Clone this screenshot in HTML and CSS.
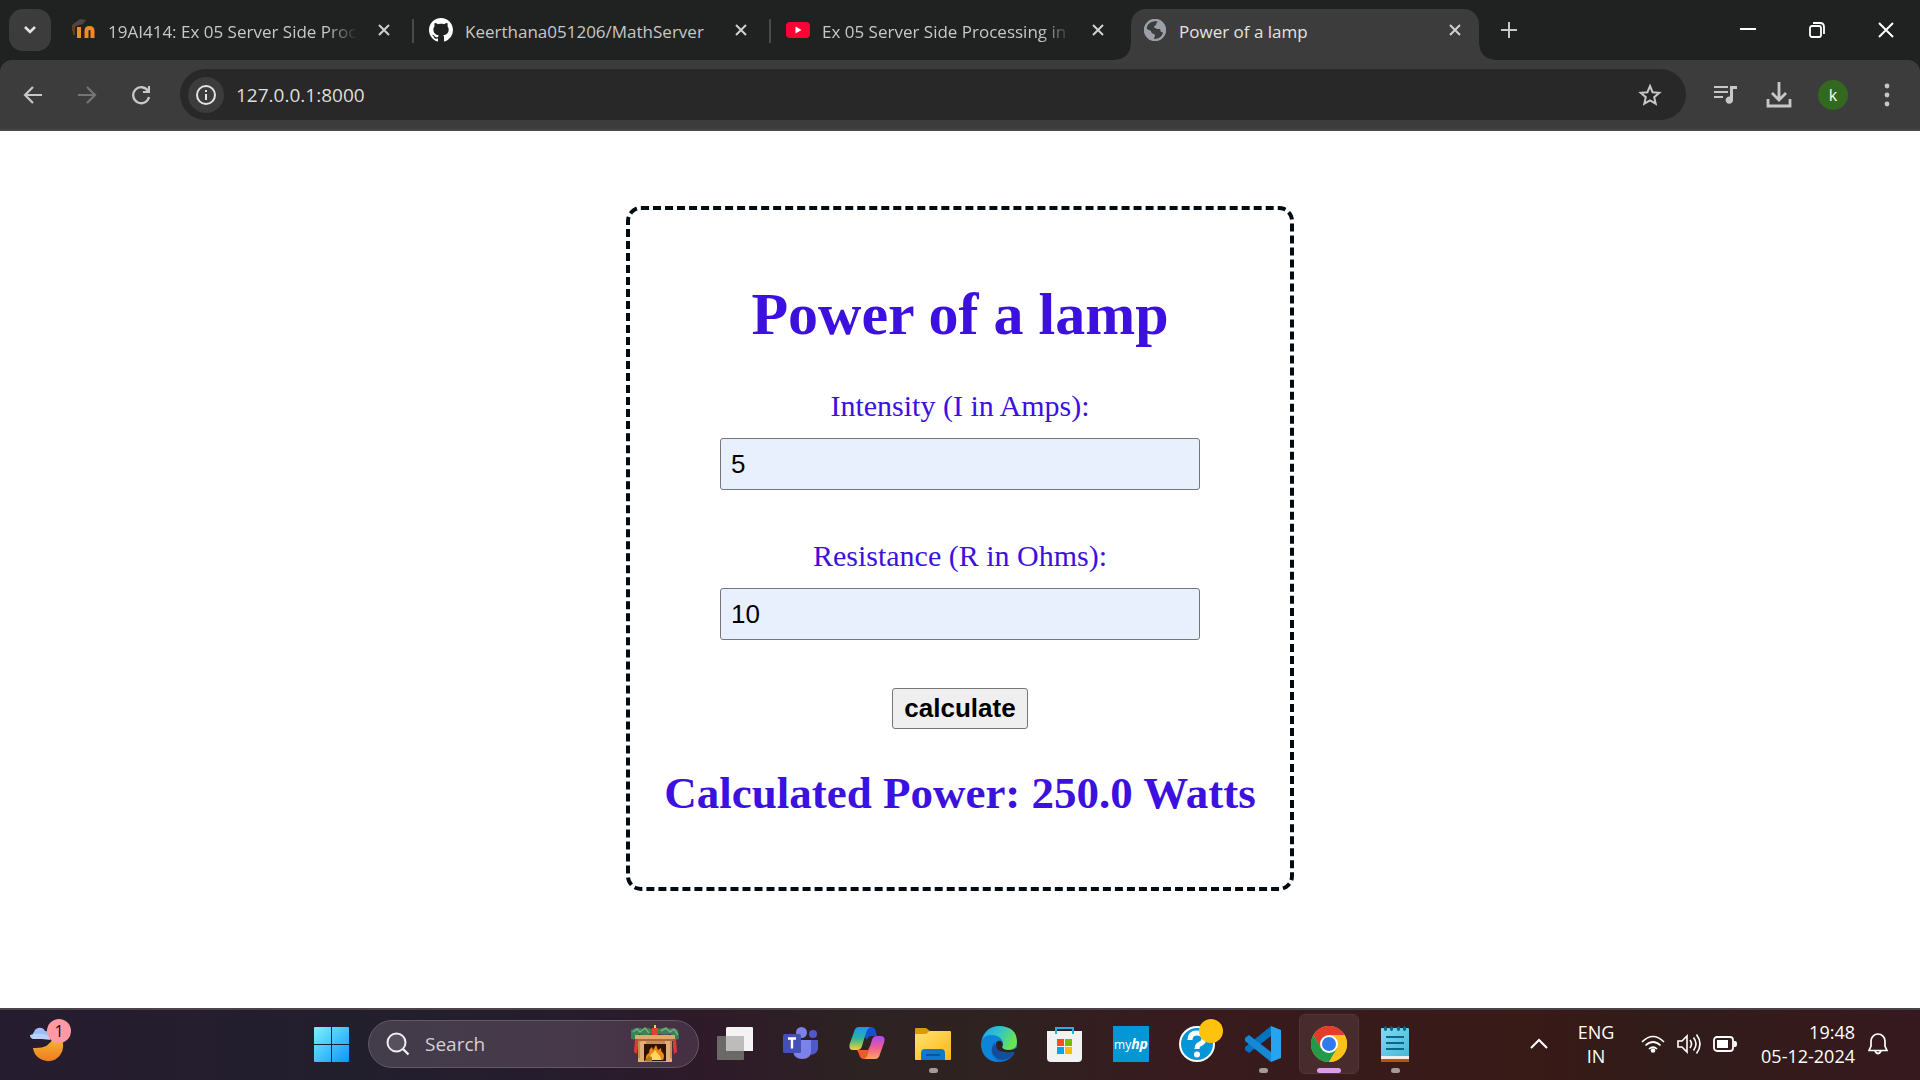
FILE: index.html
```html
<!DOCTYPE html>
<html lang="en">
<head>
<meta charset="utf-8">
<meta name="viewport" content="width=device-width, initial-scale=1">
<title>Power of a lamp</title>
<link rel="stylesheet" href="styles.css">
</head>
<body>
<header class="browser">
  <div class="tabstrip">
    <button class="tab-search" aria-label="Search tabs"><svg width="14" height="10" viewBox="0 0 14 10"><path d="M2 2l5 5 5-5" fill="none" stroke="#e3e3e3" stroke-width="2.6"/></svg></button>
    <div class="tab">
      <svg class="favicon" viewBox="0 0 24 24"><path d="M0 7L8 1l6 1-3 4-7 2-2 5H0z" fill="#50463f"/><path d="M0 9h3v8H1z" fill="#6b3a1d"/><path d="M7 20V9M14.500 20v-7q0-3 3-3t3 3v7" fill="none" stroke="#f08a24" stroke-width="4"/></svg>
      <a class="tab-title fade" href="#">19AI414: Ex 05 Server Side Processing</a>
      <button class="tab-close" aria-label="Close tab"><svg width="14" height="14" viewBox="0 0 14 14"><path d="M2 2l10 10M12 2L2 12"/></svg></button>
    </div>
    <div class="tab divided">
      <svg class="favicon" viewBox="0 0 16 16"><path fill="#fff" d="M8 0C3.58 0 0 3.58 0 8c0 3.54 2.29 6.53 5.47 7.59.4.07.55-.17.55-.38 0-.19-.01-.82-.01-1.49-2.01.37-2.53-.49-2.69-.94-.09-.23-.48-.94-.82-1.13-.28-.15-.68-.52-.01-.53.63-.01 1.08.58 1.23.82.72 1.21 1.87.87 2.33.66.07-.52.28-.87.51-1.07-1.78-.2-3.64-.89-3.64-3.95 0-.87.31-1.59.82-2.15-.08-.2-.36-1.02.08-2.12 0 0 .67-.21 2.2.82.64-.18 1.32-.27 2-.27s1.36.09 2 .27c1.53-1.04 2.2-.82 2.2-.82.44 1.1.16 1.92.08 2.12.51.56.82 1.27.82 2.15 0 3.07-1.87 3.75-3.65 3.95.29.25.54.73.54 1.48 0 1.07-.01 1.93-.01 2.2 0 .21.15.46.55.38A8.01 8.01 0 0016 8c0-4.42-3.58-8-8-8z"/></svg>
      <a class="tab-title" href="#">Keerthana051206/MathServer</a>
      <button class="tab-close" aria-label="Close tab"><svg width="14" height="14" viewBox="0 0 14 14"><path d="M2 2l10 10M12 2L2 12"/></svg></button>
    </div>
    <div class="tab divided">
      <svg class="favicon" viewBox="0 0 24 24"><rect y="4" width="24" height="16" rx="4" fill="#ff0033"/><path d="M9.500 8.500v7l6-3.500z" fill="#fff"/></svg>
      <a class="tab-title fade" href="#">Ex 05 Server Side Processing in Django</a>
      <button class="tab-close" aria-label="Close tab"><svg width="14" height="14" viewBox="0 0 14 14"><path d="M2 2l10 10M12 2L2 12"/></svg></button>
    </div>
    <div class="tab active">
      <svg class="favicon" viewBox="0 0 24 24"><circle cx="12" cy="12" r="11" fill="#9aa0a6"/><path d="M13 3c3 0 1 2 0 3 1 2-2 1-2 3 0 1 2 1 3 2h3c1 2 0 3 2 3l1 1c-1 4-4 6-7 7l-2-1c0-2 1-2 1-4-1-2-4-1-4-4l-4-2c-1-5 4-8 9-8z" fill="#3c3c3c"/><circle cx="12" cy="12" r="10" fill="none" stroke="#9aa0a6" stroke-width="2"/></svg>
      <a class="tab-title" href="#">Power of a lamp</a>
      <button class="tab-close" aria-label="Close tab"><svg width="14" height="14" viewBox="0 0 14 14"><path d="M2 2l10 10M12 2L2 12"/></svg></button>
    </div>
    <button class="new-tab" aria-label="New tab"><svg width="18" height="18" viewBox="0 0 18 18"><path d="M9 1v16M1 9h16" stroke="#c7c7c7" stroke-width="2"/></svg></button>
    <div class="window-controls">
      <button aria-label="Minimize"><svg width="16" height="16" viewBox="0 0 16 16"><path d="M0 7h16" stroke="#fff" stroke-width="2"/></svg></button>
      <button aria-label="Restore"><svg width="16" height="16" viewBox="0 0 16 16"><g fill="none" stroke="#fff" stroke-width="1.800"><rect x="1" y="4" width="11" height="11" rx="2"/><path d="M4 1h7q4 0 4 4v7"/></g></svg></button>
      <button aria-label="Close"><svg width="16" height="16" viewBox="0 0 16 16"><path d="M1 1l14 14M15 1L1 15" stroke="#fff" stroke-width="2"/></svg></button>
    </div>
  </div>
  <div class="toolbar">
    <nav class="nav">
      <button aria-label="Back"><svg width="20" height="20" viewBox="0 0 20 20"><path d="M19 10H2M10 2l-8 8 8 8" fill="none" stroke="#c7c7c7" stroke-width="2.200"/></svg></button>
      <button aria-label="Forward"><svg width="20" height="20" viewBox="0 0 20 20"><path d="M1 10h17M10 2l8 8-8 8" fill="none" stroke="#757575" stroke-width="2.200"/></svg></button>
      <button aria-label="Reload"><svg width="20" height="20" viewBox="0 0 20 20"><path d="M17 6a8 8 0 1 0 1 6" fill="none" stroke="#c7c7c7" stroke-width="2.300"/><path d="M19 1v7h-7V6h5V1z" fill="#c7c7c7"/></svg></button>
    </nav>
    <div class="omnibox">
      <button class="site-info" aria-label="View site information"><svg width="20" height="20" viewBox="0 0 20 20"><circle cx="10" cy="10" r="9" fill="none" stroke="#e3e3e3" stroke-width="2"/><path d="M10 9v6M10 5v2" stroke="#e3e3e3" stroke-width="2"/></svg></button>
      <input class="address" type="text" value="127.0.0.1:8000" aria-label="Address">
      <button class="bookmark" aria-label="Bookmark this tab"><svg width="24" height="24" viewBox="0 0 24 24"><path d="M12 3l2.600 6.200 6.700.6-5.100 4.400 1.500 6.500L12 17.300l-5.700 3.400 1.500-6.500-5.100-4.400 6.700-.6z" fill="none" stroke="#c7c7c7" stroke-width="2"/></svg></button>
    </div>
    <div class="actions">
      <button aria-label="Media controls"><svg width="24" height="24" viewBox="0 0 24 24"><path d="M1 4h14M1 9h14M1 14h9" stroke="#c7c7c7" stroke-width="2.200"/><path d="M17 16V3h7v3h-4v11a3.700 3.700 0 1 1-3-3.500z" fill="#c7c7c7"/></svg></button>
      <button aria-label="Downloads"><svg width="26" height="26" viewBox="0 0 26 26"><path d="M13 0v17M6 11l7 7 7-7M2 17v7h22v-7" fill="none" stroke="#c7c7c7" stroke-width="2.800"/></svg></button>
      <button aria-label="Profile"><span class="avatar">k</span></button>
      <button aria-label="Menu"><svg width="6" height="24" viewBox="0 0 6 24"><g fill="#c7c7c7"><circle cx="3" cy="3" r="2.400"/><circle cx="3" cy="12" r="2.400"/><circle cx="3" cy="21" r="2.400"/></g></svg></button>
    </div>
  </div>
</header>

<main class="page">
  <form class="card">
    <h1 class="heading">Power of a lamp</h1>
    <div class="field">
      <label for="intensity">Intensity (I in Amps):</label>
      <input id="intensity" type="text" value="5">
    </div>
    <div class="field">
      <label for="resistance">Resistance (R in Ohms):</label>
      <input id="resistance" type="text" value="10">
    </div>
    <button class="calculate" type="button">calculate</button>
    <h2 class="result">Calculated Power: 250.0 Watts</h2>
  </form>
</main>

<footer class="taskbar">
  <div class="widgets">
    <button class="weather" aria-label="Weather">
      <svg width="36" height="36" viewBox="0 0 36 36"><defs><linearGradient id="moon" x1="0" y1="0" x2="0" y2="1"><stop offset="0" stop-color="#f7b73a"/><stop offset="1" stop-color="#ee7d1f"/></linearGradient></defs><path d="M4 22a15 15 0 0 0 30-4q0-4-2-7l-8 1q-4 11-20 10z" fill="url(#moon)"/><path d="M5 12a4 4 0 0 1 0-6 6 6 0 0 1 11-1q5 0 5 5v4z" fill="#9dbdf5"/><path d="M1 9q10-3 20 1v3H4q-3-1-3-4z" fill="#b9d2fb"/></svg>
      <span class="count">1</span>
    </button>
  </div>
  <nav class="apps">
    <button class="app start" aria-label="Start"><svg width="36" height="36" viewBox="0 0 36 36"><defs><linearGradient id="win" gradientUnits="userSpaceOnUse" x1="0" y1="0" x2="36" y2="36"><stop offset="0" stop-color="#7df3ff"/><stop offset="1" stop-color="#0a94f8"/></linearGradient></defs><path d="M0 2q0-1 1-1h16v17H0zM18 1h16q1 0 1 1v16H18zM0 19h17v17H1q-1 0-1-1zM18 19h17v16q0 1-1 1H18z" fill="url(#win)"/></svg></button>
    <label class="search">
      <svg width="24" height="24" viewBox="0 0 24 24"><circle cx="10.500" cy="10.500" r="9" fill="#57505f" stroke="#eee" stroke-width="2"/><path d="M17 17l5.500 5.500" stroke="#eee" stroke-width="2.400"/></svg>
      <input type="search" placeholder="Search" aria-label="Search">
      <svg class="fireplace" width="50" height="38" viewBox="0 0 50 38"><path d="M8 15h34v22H8z" fill="#c98c54"/><path d="M12 16h4v21H8v-3l2-1V17zM35 16h5v17l2 1v3h-7z" fill="#e3ae75"/><path d="M14 19h22v17H14z" fill="#2d1409"/><path d="M16 35q-1-5 3-7 0-4 3-6l1 3 3-5 2 5 3-2q0 4 2 5 2 3 0 7z" fill="#ef8615"/><path d="M19 35q1-6 4-7l2-3 3 4q3 2 3 6z" fill="#ffd95b"/><path d="M15 35l4-4 3 1v4h-7z" fill="#b37224"/><path d="M1 5q6-4 12-1 7-3 11 2 7-5 12-2 7-2 12 1l1 9q-6 2-8-5-8 2-16-1-9 4-16 1-2 7-8 5z" fill="#3f7d5b"/><path d="M3 7l4-3 3 3 5-4 4 5M31 6l5-3 4 4 4-3 4 6" fill="none" stroke="#77ae79" stroke-width="1.500"/><path d="M5 10h40v4H5z" fill="#e2a86b"/><path d="M7 14h36v2H7z" fill="#a9673c"/><path d="M22 3h6v7h-6z" fill="#e0432f"/><path d="M25 0v3" stroke="#ffc94a" stroke-width="2"/><path d="M5 14h3v7l-1 8-3-2zM43 14h3l1 13-3 2-1-8z" fill="#dc3a35"/></svg>
    </label>
    <button class="app" aria-label="Task view"><svg width="36" height="36" viewBox="0 0 36 36"><path d="M10 1h25q1 0 1 1v23H9V2z" fill="#f3f3f3"/><rect y="10" width="27" height="24" rx="1" fill="#6b6967"/><path d="M9 10h18v15H9z" fill="#bdbcbb"/></svg></button>
    <button class="app" aria-label="Teams"><svg width="36" height="36" viewBox="0 0 36 36"><circle cx="30" cy="8" r="4" fill="#5059c9"/><path d="M25 14h10v9a7 7 0 0 1-10 5z" fill="#5059c9"/><circle cx="18.500" cy="6.500" r="5.500" fill="#7b83eb"/><path d="M11 14h17v11q0 8-9 8-8 0-9-8z" fill="#7b83eb"/><rect y="8" width="18" height="19" rx="1.500" fill="#4350b5"/><path d="M5 12.500h8M9 12.500v10" stroke="#fff" stroke-width="2.400"/></svg></button>
    <button class="app" aria-label="Copilot"><svg width="36" height="36" viewBox="0 0 36 36"><defs><linearGradient id="cpa" x1="0" y1="0" x2="0" y2="1"><stop offset="0" stop-color="#1c94f5"/><stop offset=".5" stop-color="#2fb59d"/><stop offset="1" stop-color="#f4d22c"/></linearGradient><linearGradient id="cpb" x1="0" y1="0" x2="0" y2="1"><stop offset="0" stop-color="#a64cf0"/><stop offset=".5" stop-color="#ef5d95"/><stop offset="1" stop-color="#fda45c"/></linearGradient></defs><path d="M10 1h12q4 0 5 5l1 4h-5q-4 0-5 4l-4-6z" fill="#1450cf"/><path d="M8 24h11l2-4 3 6-4 7h-5q-4 0-5-5z" fill="#ef5a2a"/><path d="M10 1h12q-3 0-5 6l-4 13q-1 4-5 4H4q-5 0-3-7L5 6q1-5 5-5z" fill="url(#cpa)"/><path d="M26 33H14q4 0 5-6l4-13q1-4 5-4h4q5 0 3 7l-4 11q-1 5-5 5z" fill="url(#cpb)"/></svg></button>
    <button class="app running" aria-label="File Explorer"><svg width="36" height="36" viewBox="0 0 36 36"><defs><linearGradient id="fold" x1="0" y1="0" x2="1" y2="1"><stop offset="0" stop-color="#ffe173"/><stop offset="1" stop-color="#fdb813"/></linearGradient></defs><path d="M0 3q0-1 1-1h10l4 3v5H0z" fill="#dc9a0a"/><path d="M0 8h11l4-3h20q1 0 1 1v27q0 1-1 1H1q-1 0-1-1z" fill="url(#fold)"/><path d="M6 34V27q0-4 4-4h16q4 0 4 4v7z" fill="#0f78cc"/><path d="M11 29h14" stroke="#07539c" stroke-width="2"/></svg></button>
    <button class="app" aria-label="Edge"><svg width="36" height="36" viewBox="0 0 36 36"><defs><linearGradient id="edg" x1="0" y1="0" x2="1" y2=".4"><stop offset="0" stop-color="#1ba2e4"/><stop offset=".5" stop-color="#30c3cf"/><stop offset="1" stop-color="#6ae354"/></linearGradient></defs><circle cx="18" cy="18" r="18" fill="#1173cd"/><path d="M1 14Q5 0 19 0q17 1 17 16 0 8-9 8-6 0-6-3 2-3 0-6-3-5-9-5Q4 10 1 14z" fill="url(#edg)"/><path d="M0 18q1-9 11-9 8 0 11 7-8-3-11 4-3 9 6 16Q1 35 0 18z" fill="#0b84da"/><path d="M14 17q-7 8 1 15 8 5 17-3 2-3 1-3-8 3-14-1-5-4-5-8z" fill="#124e9b"/><path d="M15 19q0-5 5-4 3 3 1 6 1 3 6 3 6 0 8-2l2 1-4 5q1-2-1-2-7 2-13-1-4-2-4-6z" fill="#2d2321"/></svg></button>
    <button class="app" aria-label="Microsoft Store"><svg width="36" height="36" viewBox="0 0 36 36"><path d="M0 5h35v27q0 4-4 4H4q-4 0-4-4z" fill="#f2f2f2"/><path d="M9 8V2h17v6" fill="none" stroke="#28aee5" stroke-width="2"/><path d="M10 13h7v7h-7z" fill="#f25022"/><path d="M18 13h7v7h-7z" fill="#7fba00"/><path d="M10 21h7v7h-7z" fill="#00a4ef"/><path d="M18 21h7v7h-7z" fill="#ffb900"/></svg></button>
    <button class="app" aria-label="myHP"><span class="myhp">my<b>hp</b></span></button>
    <button class="app help" aria-label="HP Support"><svg width="36" height="36" viewBox="0 0 36 36"><circle cx="18" cy="18" r="17" fill="#0596d8" stroke="#fff" stroke-width="2"/><path d="M11 14q0-7 7-7t7 6q0 3-4 5-3 1-3 5" fill="none" stroke="#fff" stroke-width="5"/><circle cx="18" cy="28.500" r="3" fill="#fff"/></svg><span class="dot"></span></button>
    <button class="app running" aria-label="Visual Studio Code"><svg width="36" height="36" viewBox="0 0 36 36"><path d="M26 0v10L4 27l-4-3v-3z" fill="#0073c0"/><path d="M0 12l4-3 22 17v10L0 15z" fill="#1788d4"/><path d="M26 0l10 4v28l-10 4z" fill="#26a4f2"/></svg></button>
    <button class="app running current" aria-label="Chrome"><svg width="36" height="36" viewBox="0 0 36 36"><circle cx="18" cy="18" r="18" fill="#fcc21b"/><path d="M18 18L10 22.500 2.400 9A18 18 0 0 1 33.600 9H18z" fill="#e33b2e"/><path d="M2.400 9A18 18 0 0 0 18 36l8-13.500-8-4.500-8 4.500z" fill="#229a4a"/><path d="M18 36l7.800-13.500L18 18V9h15.600A18 18 0 0 1 18 36z" fill="#fcc21b"/><circle cx="18" cy="18" r="9" fill="#fff"/><circle cx="18" cy="18" r="7" fill="#307af0"/></svg></button>
    <button class="app running" aria-label="Notepad"><svg width="36" height="36" viewBox="0 0 36 36"><path d="M4 30h28v6H4z" fill="#b9560d"/><path d="M4 28h28v5H4z" fill="#eee"/><defs><linearGradient id="note" x1="0" y1="0" x2="1" y2="1"><stop offset="0" stop-color="#83dcef"/><stop offset="1" stop-color="#46b6d8"/></linearGradient></defs><path d="M4 3q0-1 1-1h26q1 0 1 1v27H4z" fill="url(#note)"/><path d="M9 11h18M9 17h18M9 23h18" stroke="#07678d" stroke-width="2"/><g fill="#07678d"><ellipse cx="8.500" cy="2.500" rx="1.600" ry="2.500"/><ellipse cx="14.500" cy="2.500" rx="1.600" ry="2.500"/><ellipse cx="21.500" cy="2.500" rx="1.600" ry="2.500"/><ellipse cx="27.500" cy="2.500" rx="1.600" ry="2.500"/></g></svg></button>
  </nav>
  <div class="tray">
    <button class="overflow" aria-label="Show hidden icons"><svg width="18" height="12" viewBox="0 0 18 12"><path d="M1 10l8-8 8 8" fill="none" stroke="#fff" stroke-width="2"/></svg></button>
    <button class="language"><span>ENG</span><span>IN</span></button>
    <button class="status" aria-label="Network, volume and battery">
      <svg width="24" height="20" viewBox="0 0 24 20"><g fill="none" stroke="#fff" stroke-width="1.700"><path d="M1 8Q12-3 23 8M4.500 11.500q7.500-7 15 0M8 15q4-4 8 0"/></g><circle cx="12" cy="16.500" r="2.300" fill="#fff"/></svg>
      <svg width="24" height="22" viewBox="0 0 24 22"><g fill="none" stroke="#fff" stroke-width="1.600"><path d="M1 8h4l5-5v16l-5-5H1z"/><path d="M13 7q3 4 0 8M16.500 4.500q5 6.500 0 13M19.500 1.500q7 9.500 0 19"/></g></svg>
      <svg width="24" height="16" viewBox="0 0 24 16"><rect x="1" y="1" width="19" height="14" rx="3" fill="none" stroke="#fff" stroke-width="1.800"/><path d="M4 4h11v8H4z" fill="#fff"/><path d="M21 5h1q2 0 2 3t-2 3h-1z" fill="#fff"/></svg>
    </button>
    <button class="clock"><span>19:48</span><span>05-12-2024</span></button>
    <button class="bell" aria-label="Notifications"><svg width="20" height="22" viewBox="0 0 20 22"><path d="M3 8a7 7 0 0 1 14 0v5l2 4.500H1L3 13z" fill="none" stroke="#fff" stroke-width="1.700"/><path d="M7 18q3 5 6 0" fill="none" stroke="#fff" stroke-width="2"/></svg></button>
  </div>
</footer>
</body>
</html>
```
FILE: styles.css
```css
* { box-sizing: border-box; }

body {
  margin: 0;
  min-height: 100vh;
  display: flex;
  flex-direction: column;
  background: #fff;
  font-family: "Open Sans", "Noto Sans", sans-serif;
}

button {
  display: flex;
  align-items: center;
  justify-content: center;
  padding: 0;
  border: 0;
  background: none;
  color: inherit;
  font: inherit;
}

svg { display: block; flex: none; }

/* Browser tabs */
.browser { background: #202221; }

.tabstrip {
  display: flex;
  align-items: center;
  height: 60px;
  padding-left: 9px;
}

.tab-search {
  width: 42px;
  height: 42px;
  margin-right: 9px;
  border-radius: 14px;
  background: #3c3c3c;
}

.tab {
  position: relative;
  display: flex;
  align-items: center;
  flex: 0 1 357px;
  min-width: 0;
  height: 42px;
  padding: 0 26px 0 12px;
}

.divided::before {
  content: "";
  position: absolute;
  left: -5px;
  top: 10px;
  width: 2px;
  height: 24px;
  background: #4a4a4a;
}

.favicon { width: 24px; height: 24px; margin-right: 12px; }

.tab-title {
  flex: 1;
  min-width: 0;
  padding-top: 3px;
  overflow: hidden;
  white-space: nowrap;
  font-size: 17px;
  line-height: 24px;
  color: #c7c7c7;
  text-decoration: none;
}

.fade {
  -webkit-mask-image: linear-gradient(to left, transparent, #000 32px);
  mask-image: linear-gradient(to left, transparent, #000 32px);
}

.tab-close { width: 14px; height: 14px; margin-left: 19px; }
.tab-close path { stroke: #d0d0d0; stroke-width: 2; }

.active {
  flex-basis: 348px;
  height: 51px;
  align-self: flex-end;
  padding: 0 17px 9px 12px;
  border-radius: 15px 15px 0 0;
  background: #3c3c3c;
}
.active .tab-title { color: #e3e3e3; }
.active::before,
.active::after {
  content: "";
  position: absolute;
  bottom: 0;
  width: 15px;
  height: 15px;
}
.active::before { left: -15px; background: radial-gradient(circle at 0 0, transparent 14px, #3c3c3c 15px); }
.active::after { right: -15px; background: radial-gradient(circle at 100% 0, transparent 14px, #3c3c3c 15px); }

.new-tab { width: 42px; height: 42px; margin-left: 9px; }

.window-controls { display: flex; margin-left: auto; }
.window-controls button { width: 69px; height: 60px; }

/* Toolbar */
.toolbar {
  display: flex;
  align-items: center;
  height: 71px;
  border-bottom: 2px solid #474747;
  border-radius: 12px 12px 0 0;
  background: #3c3c3c;
}

.nav { display: flex; padding: 0 12px 0 6px; }
.nav button { width: 54px; height: 51px; }

.omnibox {
  display: flex;
  align-items: center;
  flex: 1;
  height: 51px;
  padding: 0 24px 0 8px;
  border-radius: 26px;
  background: #282828;
}

.site-info { width: 36px; height: 36px; border-radius: 50%; background: #3c3c3c; }

.address {
  flex: 1;
  min-width: 0;
  margin: 0 12px;
  padding: 0;
  border: 0;
  background: none;
  color: #dedede;
  font: 19px/28px "Open Sans", "Noto Sans", sans-serif;
}

.actions { display: flex; padding: 0 6px 0 12px; }
.actions button { width: 54px; height: 51px; }

.avatar {
  width: 30px;
  height: 30px;
  border-radius: 50%;
  background: #33691e;
  color: #fff;
  font-size: 16px;
  line-height: 30px;
}

/* Page */
.page {
  display: flex;
  flex: 1;
  align-items: flex-start;
  justify-content: center;
  padding: 75px 24px;
  font-family: "Liberation Serif", serif;
  color: #3c10df;
}

.card {
  display: flex;
  flex-direction: column;
  align-items: center;
  width: 100%;
  max-width: 668px;
  padding: 70px 24px 68px;
  border: 4px dashed #000c12;
  border-radius: 15px;
}

.heading { margin: 0 0 40px; font-size: 60px; line-height: 68px; }

.field {
  display: flex;
  flex-direction: column;
  align-items: center;
  gap: 14px;
  width: 100%;
  max-width: 480px;
  margin-bottom: 48px;
  font-size: 30px;
  line-height: 36px;
}

.field input {
  width: 100%;
  height: 52px;
  padding: 0 10px;
  border: 1px solid #767676;
  border-radius: 3px;
  background: #e8f0fe;
  color: #000;
  font: 26px "Liberation Sans", sans-serif;
}

.calculate {
  height: 41px;
  padding: 0 11px;
  border: 1px solid #767676;
  border-radius: 3px;
  background: #efefef;
  color: #000;
  font: bold 26px "Liberation Sans", sans-serif;
}

.result { margin: 38px 0 0; font-size: 45px; line-height: 52px; }

/* Taskbar */
.taskbar {
  display: flex;
  align-items: center;
  height: 72px;
  padding-bottom: 2px;
  border-top: 2px solid #4b4347;
  background: linear-gradient(90deg, #261c2f 0%, #221f2d 18%, #251d2d 28%, #2e1a29 37%, #2d2322 45%, #2f2221 52%, #371b1e 61%, #381a17 80%, #301c1a 87%, #351a1c 94%, #35191f 100%);
  color: #fff;
}

.widgets { flex: 0 1 302px; padding-left: 29px; }
.weather { position: relative; }

.count {
  position: absolute;
  left: 18px;
  top: -7px;
  width: 24px;
  height: 24px;
  border-radius: 50%;
  background: #ff99a4;
  color: #111;
  font-size: 16px;
  line-height: 24px;
}

.apps { display: flex; align-items: center; gap: 6px; }

.app {
  position: relative;
  width: 60px;
  height: 60px;
  border-radius: 6px;
}

.running::after {
  content: "";
  position: absolute;
  bottom: 1px;
  width: 9px;
  height: 5px;
  border-radius: 3px;
  background: #a39a99;
}

.current {
  border: 1px solid #513738;
  background: #482b2c;
}
.current::after { bottom: 0; width: 24px; background: #dc9eea; }

.search {
  display: flex;
  align-items: center;
  width: 331px;
  height: 48px;
  padding: 0 18px 0 17px;
  border: 1px solid #625866;
  border-radius: 24px;
  background: linear-gradient(90deg, #423c4b, #47394a 60%, #452f42);
}

.search input {
  flex: 1;
  min-width: 0;
  margin-left: 15px;
  padding: 0;
  border: 0;
  background: none;
  color: #fff;
  font: 19px/26px "Open Sans", "Noto Sans", sans-serif;
}
.search input::placeholder { color: #d4d0d6; opacity: 1; }

.myhp {
  width: 36px;
  height: 36px;
  background: #0596d4;
  font-size: 12px;
  line-height: 36px;
}
.myhp b { font-size: 14px; font-style: italic; }

.dot {
  position: absolute;
  right: 4px;
  top: 5px;
  width: 24px;
  height: 24px;
  border-radius: 50%;
  background: #ffc20e;
}

.tray {
  display: flex;
  align-items: center;
  margin-left: auto;
  padding-right: 32px;
  font-size: 18px;
  line-height: 24px;
}

.language { flex-direction: column; width: 60px; margin-left: 18px; }
.status { gap: 12px; margin-left: 15px; }
.clock { flex-direction: column; align-items: flex-end; margin: 0 13px 0 24px; }
```
